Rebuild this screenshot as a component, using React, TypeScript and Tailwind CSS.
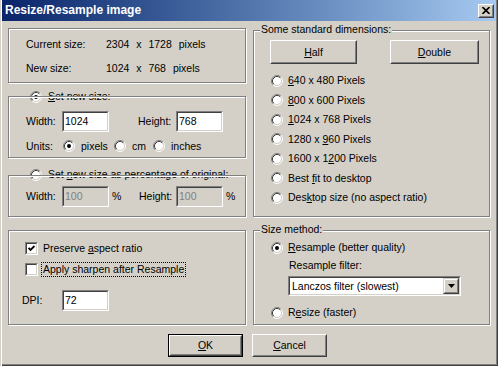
import React from 'react';

const Radio = ({ on }: { on?: boolean }) => (
  <svg width="12" height="12" viewBox="0 0 12 12" className="shrink-0">
    <circle cx="6" cy="6" r="4.5" fill="#fff" />
    <path d="M2.11 9.89A5.5 5.5 0 0 1 9.89 2.11" fill="none" stroke="#808080" />
    <path d="M9.89 2.11A5.5 5.5 0 0 1 2.11 9.89" fill="none" stroke="#fff" />
    <path d="M2.82 9.18A4.5 4.5 0 0 1 9.18 2.82" fill="none" stroke="#404040" />
    <path d="M9.18 2.82A4.5 4.5 0 0 1 2.82 9.18" fill="none" stroke="#d4d0c8" />
    {on && <circle cx="6" cy="6" r="2" fill="#000" />}
  </svg>
);

const Check = ({ on }: { on?: boolean }) => (
  <div className="w-[13px] h-[13px] shrink-0 flex border border-t-[#808080] border-l-[#808080] border-b-white border-r-white">
    <div className="flex-1 flex items-center justify-center bg-white border border-t-[#404040] border-l-[#404040] border-b-[#d4d0c8] border-r-[#d4d0c8]">
      {on && (
        <svg width="7" height="7" viewBox="0 0 7 7">
          <path d="M0.5 3 L2.5 5 L6.5 1" fill="none" stroke="#000" strokeWidth="1.8" />
        </svg>
      )}
    </div>
  </div>
);

const Field = ({ value, disabled, w = 'w-[47px]' }: { value: string; disabled?: boolean; w?: string }) => (
  <div className={`${w} h-[21px] shrink-0 flex border border-t-[#808080] border-l-[#808080] border-b-white border-r-white`}>
    <div
      className={`flex-1 flex items-center pl-[1px] border border-t-[#404040] border-l-[#404040] border-b-[#d4d0c8] border-r-[#d4d0c8] ${
        disabled ? 'bg-[#d4d0c8] text-[#808080]' : 'bg-white'
      }`}
    >
      {value}
    </div>
  </div>
);

const Button = ({ children, w, h = 'h-[23px]', def }: { children: React.ReactNode; w: string; h?: string; def?: boolean }) => (
  <div className={`${w} ${h} shrink-0 flex ${def ? 'border border-black' : ''}`}>
    <div className="flex-1 flex border border-t-white border-l-white border-b-[#404040] border-r-[#404040]">
      <div className="flex-1 flex items-center justify-center border border-t-[#d4d0c8] border-l-[#d4d0c8] border-b-[#808080] border-r-[#808080]">
        {children}
      </div>
    </div>
  </div>
);

const Group = ({ h, label, children }: { h: string; label?: string; children?: React.ReactNode }) => (
  <div className={`relative ${h} border border-[#808080] shadow-[inset_1px_1px_0_#fff,1px_1px_0_#fff]`}>
    {label && <span className="absolute left-[6px] top-[-8px] bg-[#d4d0c8] px-[1px]">{label}</span>}
    {children}
  </div>
);

const Opt = ({ on, children, gap = 'ml-[5px]', w }: { on?: boolean; children: React.ReactNode; gap?: string; w?: string }) => (
  <div className={`flex items-center ${w ?? ''}`}>
    <Radio on={on} />
    <span className={`${gap} whitespace-nowrap`}>{children}</span>
  </div>
);

export default function App() {
  const dims: React.ReactNode[] = [
    <><u>6</u>40 x 480 Pixels</>,
    <><u>8</u>00 x 600 Pixels</>,
    <><u>1</u>024 x 768 Pixels</>,
    <>1280 x <u>9</u>60 Pixels</>,
    <>1600 x 1<u>2</u>00 Pixels</>,
    <>Best <u>f</u>it to desktop</>,
    <>Des<u>k</u>top size (no aspect ratio)</>,
  ];

  return (
    <div className="isolate w-[498px] h-[366px] bg-[#d4d0c8] flex flex-col text-[10.5px] leading-[13px] text-black font-['Liberation_Sans',Arial,sans-serif] shadow-[inset_1px_0_0_#d4d0c8,inset_2px_0_0_#fff,inset_-1px_-1px_0_#404040,inset_-2px_-2px_0_#808080]">
      {/* title bar */}
      <div className="mx-[2px] h-[21px] shrink-0 flex items-center justify-between pl-[3px] pr-[2px] bg-linear-to-r from-[#0a246a] to-[#a6caf0]">
        <span className="text-white font-bold text-[12px]">Resize/Resample image</span>
        <div className="w-[16px] h-[14px] flex border border-t-white border-l-white border-b-[#404040] border-r-[#404040] bg-[#d4d0c8]">
          <div className="flex-1 flex items-center justify-center border border-t-[#d4d0c8] border-l-[#d4d0c8] border-b-[#808080] border-r-[#808080]">
            <svg width="8" height="7" viewBox="0 0 8 7">
              <path d="M0.5 0 L7.5 7 M7.5 0 L0.5 7" stroke="#000" strokeWidth="1.6" />
            </svg>
          </div>
        </div>
      </div>

      <div className="flex gap-[7px] pl-[8px] pt-[7px]">
        {/* left column */}
        <div className="w-[238px] flex flex-col">
          <Group h="h-[55px]">
            <div className="pt-[3px] pl-[17px]">
              <div className="h-[24px] flex items-center">
                <span className="w-[80px]">Current size:</span>
                <span className="[word-spacing:4px]">2304 x 1728 pixels</span>
              </div>
              <div className="h-[24px] flex items-center">
                <span className="w-[80px]">New size:</span>
                <span className="[word-spacing:4px]">1024 x 768 pixels</span>
              </div>
            </div>
          </Group>

          <div className="mt-[13px]">
            <Group h="h-[62px]">
              <div className="absolute -z-10 left-[21px] top-[-7px] flex items-center">
                <Radio on />
                <span className="ml-[6px]"><u>S</u>et new size:</span>
              </div>
              <div className="pt-[14px] pl-[17px]">
                <div className="h-[21px] flex items-center">
                  <span className="w-[36px]">Width:</span>
                  <Field value="1024" />
                  <span className="ml-[29px] w-[38px]">Height:</span>
                  <Field value="768" />
                </div>
                <div className="mt-[4px] h-[20px] flex items-center">
                  <span className="w-[37px]">Units:</span>
                  <Opt on gap="ml-[6px]" w="w-[51px]">pixels</Opt>
                  <Opt gap="ml-[6px]" w="w-[39px]">cm</Opt>
                  <Opt gap="ml-[6px]">inches</Opt>
                </div>
              </div>
            </Group>
          </div>

          <div className="mt-[17px]">
            <Group h="h-[42px]">
              <div className="absolute -z-10 left-[21px] top-[-8px] flex items-center">
                <Radio />
                <span className="ml-[6px]">Set <u>n</u>ew size as percentage of original:</span>
              </div>
              <div className="pt-[10px] pl-[17px] h-[21px] flex items-center box-content">
                <span className="w-[36px]">Width:</span>
                <Field value="100" disabled />
                <span className="w-[30px] pl-[3px]">%</span>
                <span className="w-[37px]">Height:</span>
                <Field value="100" disabled />
                <span className="pl-[3px]">%</span>
              </div>
            </Group>
          </div>

          <div className="mt-[13px]">
            <Group h="h-[95px]">
              <div className="pt-[11px] pl-[16px] flex flex-col">
                <div className="h-[13px] flex items-center">
                  <Check on />
                  <span className="ml-[5px]">Preserve <u>a</u>spect ratio</span>
                </div>
                <div className="mt-[7px] h-[15px] flex items-center">
                  <Check />
                  <span className="ml-[3px] px-[1px] h-[15px] border border-dotted border-black leading-[13px]">
                    Apply sharpen after Resample
                  </span>
                </div>
                <div className="mt-[13px] -ml-[3px] h-[21px] flex items-center">
                  <span className="w-[40px]">DPI:</span>
                  <Field value="72" />
                </div>
              </div>
            </Group>
          </div>
        </div>

        {/* right column */}
        <div className="w-[237px] flex flex-col pt-[2px]">
          <Group h="h-[187px]" label="Some standard dimensions:">
            <div className="pt-[9px] pl-[16px]">
              <div className="flex">
                <Button w="w-[87px]" h="h-[24px]"><u>H</u>alf</Button>
                <div className="ml-[33px]">
                  <Button w="w-[89px]" h="h-[24px]"><u>D</u>ouble</Button>
                </div>
              </div>
              <div className="mt-[7px] pl-[1px] flex flex-col">
                {dims.map((d, i) => (
                  <div key={i} className="h-[19.5px] flex items-center">
                    <Opt>{d}</Opt>
                  </div>
                ))}
              </div>
            </div>
          </Group>

          <div className="mt-[13px]">
            <Group h="h-[95px]" label="Size method:">
              <div className="pt-[10px] pl-[17px] flex flex-col">
                <div className="h-[13px] flex items-center">
                  <Opt on><u>R</u>esample (better quality)</Opt>
                </div>
                <div className="mt-[5px] h-[13px] pl-[18px] flex items-center">Resample filter:</div>
                <div className="mt-[4px] ml-[17px] w-[173px] h-[20px] flex border border-t-[#808080] border-l-[#808080] border-b-white border-r-white">
                  <div className="flex-1 flex items-center bg-white border border-t-[#404040] border-l-[#404040] border-b-[#d4d0c8] border-r-[#d4d0c8]">
                    <span className="flex-1 pl-[2px]">Lanczos filter (slowest)</span>
                    <div className="w-[16px] h-full flex border border-t-[#d4d0c8] border-l-[#d4d0c8] border-b-[#404040] border-r-[#404040] bg-[#d4d0c8]">
                      <div className="flex-1 flex items-center justify-center border border-t-white border-l-white border-b-[#808080] border-r-[#808080]">
                        <svg width="7" height="4" viewBox="0 0 7 4">
                          <path d="M0 0 H7 L3.5 4 Z" fill="#000" />
                        </svg>
                      </div>
                    </div>
                  </div>
                </div>
                <div className="mt-[10px] h-[13px] flex items-center">
                  <Opt>R<u>e</u>size (faster)</Opt>
                </div>
              </div>
            </Group>
          </div>
        </div>
      </div>

      <div className="mt-[9px] pl-[168px] flex gap-[9px]">
        <Button w="w-[75px]" def><u>O</u>K</Button>
        <Button w="w-[75px]"><u>C</u>ancel</Button>
      </div>
    </div>
  );
}
